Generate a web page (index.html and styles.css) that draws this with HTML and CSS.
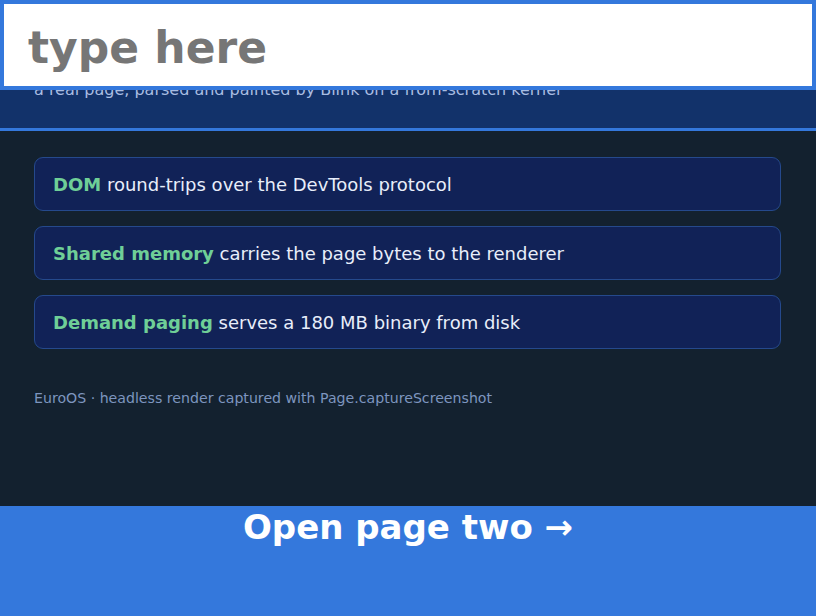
FILE: index.html
```html
<!DOCTYPE html>
<html lang="en">
<head>
<meta charset="utf-8">
<title>EuroOS</title>
<link rel="stylesheet" href="styles.css">
</head>
<body>
<input class="search" type="text" placeholder="type here">
<header class="hero">
  <p class="subtitle">a real page, parsed and painted by Blink on a from-scratch kernel</p>
</header>
<main class="content">
  <ul class="facts">
    <li class="fact"><strong>DOM</strong> round-trips over the DevTools protocol</li>
    <li class="fact"><strong>Shared memory</strong> carries the page bytes to the renderer</li>
    <li class="fact"><strong>Demand paging</strong> serves a 180 MB binary from disk</li>
  </ul>
  <p class="note">EuroOS · headless render captured with Page.captureScreenshot</p>
</main>
<a class="next" href="#">Open page two →</a>
</body>
</html>
```

FILE: styles.css
```css
html, body {
  margin: 0;
  padding: 0;
  height: 100%;
}
body {
  background: #13212f;
  font-family: "DejaVu Sans", sans-serif;
  color: #e6ecf8;
  display: flex;
  flex-direction: column;
  overflow: hidden;
}
.search {
  position: fixed;
  top: 0;
  left: 0;
  width: 100%;
  height: 90px;
  box-sizing: border-box;
  margin: 0;
  border: 4px solid #3478dc;
  padding: 4px 24px 0;
  background: #ffffff;
  font-family: "DejaVu Sans", sans-serif;
  font-size: 44px;
  font-weight: bold;
  color: #222;
  outline: none;
  z-index: 2;
}
.search::placeholder {
  color: #767676;
  opacity: 1;
}
.hero {
  background: #12326a;
  border-bottom: 3px solid #3478dc;
  height: 128px;
  box-sizing: content-box;
  padding: 0 34px;
  display: flex;
  flex-direction: column;
  justify-content: flex-start;
}
.subtitle {
  margin: 80px 0 0;
  font-size: 16px;
  color: #a9bde2;
}
.content {
  flex: 1;
  padding: 26px 35px 0 34px;
}
.facts {
  list-style: none;
  margin: 0;
  padding: 0;
  display: flex;
  flex-direction: column;
  gap: 15px;
}
.fact {
  background: #112257;
  border: 1px solid #25498c;
  border-radius: 9px;
  padding: 17px 18px 15px;
  font-size: 18px;
  line-height: 20px;
  color: #e8eefa;
}
.fact strong {
  color: #6fcf97;
}
.note {
  margin: 41px 0 0;
  font-size: 14.15px;
  color: #7d95bf;
}
.next {
  display: block;
  height: 110px;
  box-sizing: border-box;
  padding-top: 1px;
  background: #3478dc;
  color: #ffffff;
  text-decoration: none;
  text-align: center;
  font-size: 34px;
  font-weight: bold;
  flex: none;
}
```
